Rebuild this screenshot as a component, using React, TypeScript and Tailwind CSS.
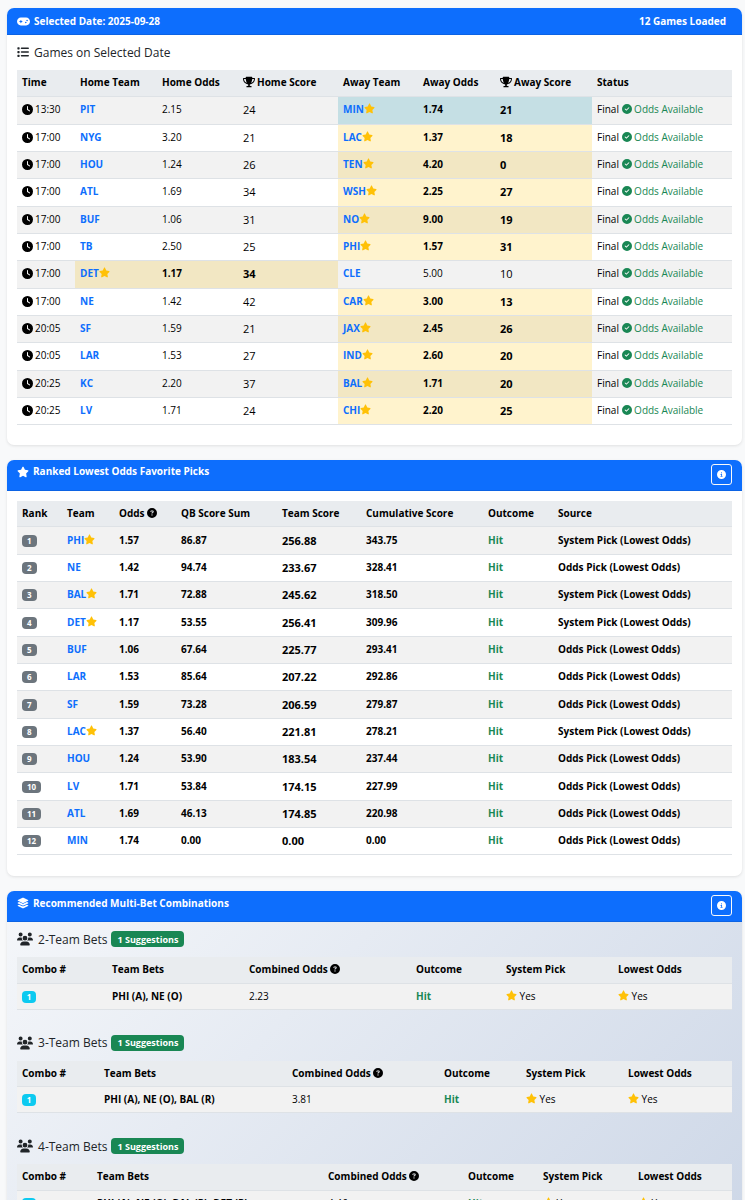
import type { ReactNode } from "react";
import clsx from "clsx";
import {
  FaCircleCheck,
  FaCircleInfo,
  FaCircleQuestion,
  FaClock,
  FaGamepad,
  FaLayerGroup,
  FaList,
  FaStar,
  FaTrophy,
  FaUsers,
} from "react-icons/fa6";

type Side = "home" | "away";

interface IGame {
  time: string;
  home: string;
  homeOdds: string;
  homeScore: number;
  away: string;
  awayOdds: string;
  awayScore: number;
  pick: Side;
  locked?: boolean;
}

interface IPick {
  team: string;
  odds: string;
  qb: string;
  score: string;
  total: string;
  system?: boolean;
}

interface ICombo {
  size: number;
  teams: string;
  odds: string;
  cols: string[];
}

const games: IGame[] = [
  { time: "13:30", home: "PIT", homeOdds: "2.15", homeScore: 24, away: "MIN", awayOdds: "1.74", awayScore: 21, pick: "away", locked: true },
  { time: "17:00", home: "NYG", homeOdds: "3.20", homeScore: 21, away: "LAC", awayOdds: "1.37", awayScore: 18, pick: "away" },
  { time: "17:00", home: "HOU", homeOdds: "1.24", homeScore: 26, away: "TEN", awayOdds: "4.20", awayScore: 0, pick: "away" },
  { time: "17:00", home: "ATL", homeOdds: "1.69", homeScore: 34, away: "WSH", awayOdds: "2.25", awayScore: 27, pick: "away" },
  { time: "17:00", home: "BUF", homeOdds: "1.06", homeScore: 31, away: "NO", awayOdds: "9.00", awayScore: 19, pick: "away" },
  { time: "17:00", home: "TB", homeOdds: "2.50", homeScore: 25, away: "PHI", awayOdds: "1.57", awayScore: 31, pick: "away" },
  { time: "17:00", home: "DET", homeOdds: "1.17", homeScore: 34, away: "CLE", awayOdds: "5.00", awayScore: 10, pick: "home" },
  { time: "17:00", home: "NE", homeOdds: "1.42", homeScore: 42, away: "CAR", awayOdds: "3.00", awayScore: 13, pick: "away" },
  { time: "20:05", home: "SF", homeOdds: "1.59", homeScore: 21, away: "JAX", awayOdds: "2.45", awayScore: 26, pick: "away" },
  { time: "20:05", home: "LAR", homeOdds: "1.53", homeScore: 27, away: "IND", awayOdds: "2.60", awayScore: 20, pick: "away" },
  { time: "20:25", home: "KC", homeOdds: "2.20", homeScore: 37, away: "BAL", awayOdds: "1.71", awayScore: 20, pick: "away" },
  { time: "20:25", home: "LV", homeOdds: "1.71", homeScore: 24, away: "CHI", awayOdds: "2.20", awayScore: 25, pick: "away" },
];

const picks: IPick[] = [
  { team: "PHI", odds: "1.57", qb: "86.87", score: "256.88", total: "343.75", system: true },
  { team: "NE", odds: "1.42", qb: "94.74", score: "233.67", total: "328.41" },
  { team: "BAL", odds: "1.71", qb: "72.88", score: "245.62", total: "318.50", system: true },
  { team: "DET", odds: "1.17", qb: "53.55", score: "256.41", total: "309.96", system: true },
  { team: "BUF", odds: "1.06", qb: "67.64", score: "225.77", total: "293.41" },
  { team: "LAR", odds: "1.53", qb: "85.64", score: "207.22", total: "292.86" },
  { team: "SF", odds: "1.59", qb: "73.28", score: "206.59", total: "279.87" },
  { team: "LAC", odds: "1.37", qb: "56.40", score: "221.81", total: "278.21", system: true },
  { team: "HOU", odds: "1.24", qb: "53.90", score: "183.54", total: "237.44" },
  { team: "LV", odds: "1.71", qb: "53.84", score: "174.15", total: "227.99" },
  { team: "ATL", odds: "1.69", qb: "46.13", score: "174.85", total: "220.98" },
  { team: "MIN", odds: "1.74", qb: "0.00", score: "0.00", total: "0.00" },
];

const gameCols = ["w-[58px]", "w-[82px]", "w-[81px]", "w-[100px]", "w-[80px]", "w-[77px]", "w-[97px]", "w-[140px]"];
const pickCols = ["w-[45px]", "w-[52px]", "w-[62px]", "w-[101px]", "w-[84px]", "w-[122px]", "w-[70px]", "w-[179px]"];

const combos: ICombo[] = [
  {
    size: 2,
    teams: "PHI (A), NE (O)",
    odds: "2.23",
    cols: ["w-[90px]", "w-[137px]", "w-[167px]", "w-[90px]", "w-[112px]", "w-[119px]"],
  },
  {
    size: 3,
    teams: "PHI (A), NE (O), BAL (R)",
    odds: "3.81",
    cols: ["w-[82px]", "w-[188px]", "w-[152px]", "w-[82px]", "w-[102px]", "w-[109px]"],
  },
  {
    size: 4,
    teams: "PHI (A), NE (O), BAL (R), DET (R)",
    odds: "4.46",
    cols: ["w-[75px]", "w-[231px]", "w-[140px]", "w-[75px]", "w-[95px]", "w-[99px]"],
  },
];

const Star = () => <FaStar className="inline size-[11px] align-[-1px] text-[#ffc107]" />;
const Trophy = () => <FaTrophy className="mr-[2px] inline size-[12px] align-[-2px]" />;
const Help = () => <FaCircleQuestion className="inline size-[10px] align-[-1px]" />;

const Team = ({ name, star }: { name: string; star?: boolean }) => (
  <>
    <a href={`#${name}`} className="font-bold text-[#0d6efd]">{name}</a>
    {star && <Star />}
  </>
);

const InfoButton = ({ label }: { label: string }) => (
  <button
    type="button"
    aria-label={label}
    className="mt-[4px] mb-[5px] flex size-[21px] cursor-pointer items-center justify-center rounded-[3px] border border-[#f8f9fa]"
  >
    <FaCircleInfo className="size-[9px]" />
  </button>
);

const Card = ({ header, className, children }: { header: ReactNode; className?: string; children: ReactNode }) => (
  <section className={clsx("overflow-hidden rounded-[7px] shadow-[0_1px_3px_rgba(0,0,0,0.1)]", className ?? "bg-white")}>
    <header className="flex items-start justify-between border-b border-[#0c63e4] bg-[#0d6efd] px-[10px] font-bold text-white">
      {header}
    </header>
    {children}
  </section>
);

const Table = ({ cols, heads, children }: { cols: string[]; heads: ReactNode[]; children: ReactNode }) => (
  <table className="w-full table-fixed border-collapse text-left whitespace-nowrap">
    <colgroup>
      {cols.map((c, i) => <col key={i} className={c} />)}
    </colgroup>
    <thead>
      <tr className="h-[26px] border-b border-[#dee2e6] bg-[#e9ecef]">
        {heads.map((h, i) => <th key={i} scope="col" className="px-[5px] font-bold">{h}</th>)}
      </tr>
    </thead>
    <tbody>{children}</tbody>
  </table>
);

const rowClass = "h-[27px] border-b border-[#dee2e6] odd:bg-[#f2f2f2] nth-[3n+1]:h-[28px] [&>td]:pb-px";

const GameRow = ({ game, striped }: { game: IGame; striped: boolean }) => {
  const cell = (side: Side) => {
    if (game.pick !== side) return "px-[5px]";
    const color = game.locked ? "bg-[#c5dfe4]" : striped ? "bg-[#f2e7c3]" : "bg-[#fff3cd]";
    return clsx("px-[5px] font-bold", color);
  };
  return (
    <tr className={rowClass}>
      <td className="px-[5px]"><FaClock className="mr-[2px] inline size-[11px] align-[-2px]" />{game.time}</td>
      <td className={cell("home")}><Team name={game.home} star={game.pick === "home"} /></td>
      <td className={cell("home")}>{game.homeOdds}</td>
      <td className={clsx("text-[11px]", cell("home"))}>{game.homeScore}</td>
      <td className={cell("away")}><Team name={game.away} star={game.pick === "away"} /></td>
      <td className={cell("away")}>{game.awayOdds}</td>
      <td className={clsx("text-[11px]", cell("away"))}>{game.awayScore}</td>
      <td className="px-[5px]">
        Final <span className="text-[#198754]"><FaCircleCheck className="inline size-[10px] align-[-1px]" /> Odds Available</span>
      </td>
    </tr>
  );
};

const ComboTable = ({ combo }: { combo: ICombo }) => (
  <div className="mb-[25px]">
    <h2 className="mb-[10px] flex h-[16px] items-center text-[12px] font-medium text-[#212529]">
      <FaUsers className="mr-[5px] size-[16px]" />
      {combo.size}-Team Bets
      <span className="ml-[4px] flex h-[16px] items-center rounded-[4px] bg-[#198754] px-[6px] text-[9px] font-bold text-white">1 Suggestions</span>
    </h2>
    <Table
      cols={combo.cols}
      heads={["Combo #", "Team Bets", <>Combined Odds <Help /></>, "Outcome", "System Pick", "Lowest Odds"]}
    >
      <tr className="h-[26px] border-b border-[#dee2e6] bg-[#f2f2f2]">
        <td className="px-[5px]">
          <span className="inline-block h-[12px] w-[14px] rounded-[4px] bg-[#0dcaf0] text-center align-middle text-[8px] leading-[12px] font-bold text-white">1</span>
        </td>
        <td className="px-[5px] font-bold">{combo.teams}</td>
        <td className="px-[5px]">{combo.odds}</td>
        <td className="px-[5px] font-bold text-[#198754]">Hit</td>
        <td className="px-[5px]"><Star /> Yes</td>
        <td className="px-[5px]"><Star /> Yes</td>
      </tr>
    </Table>
  </div>
);

export default function App() {
  return (
    <main className="flex min-h-screen flex-col gap-[15px] bg-[#f8f9fa] pt-[8px] pr-[3px] pl-[7px] font-['Open_Sans','Noto_Sans',sans-serif] text-[10px] leading-[15px] text-black">
      <Card
        header={
          <>
            <h1 className="flex h-[26px] items-center gap-[4px]"><FaGamepad className="size-[13px]" /> Selected Date: 2025-09-28</h1>
            <p className="flex h-[26px] items-center px-[6px]">12 Games Loaded</p>
          </>
        }
      >
        <div className="px-[10px] pt-[8px] pb-[20px]">
          <h2 className="mb-[9px] flex h-[18px] items-center gap-[5px] text-[12px] font-medium text-[#212529]">
            <FaList className="size-[12px]" /> Games on Selected Date
          </h2>
          <Table
            cols={gameCols}
            heads={["Time", "Home Team", "Home Odds", <><Trophy />Home Score</>, "Away Team", "Away Odds", <><Trophy />Away Score</>, "Status"]}
          >
            {games.map((g, i) => <GameRow key={i} game={g} striped={i % 2 === 0} />)}
          </Table>
        </div>
      </Card>

      <Card
        header={
          <>
            <h2 className="flex h-[24px] items-center gap-[4px]"><FaStar className="size-[12px]" /> Ranked Lowest Odds Favorite Picks</h2>
            <InfoButton label="About ranked picks" />
          </>
        }
      >
        <div className="px-[10px] pt-[10px] pb-[21px]">
          <Table
            cols={pickCols}
            heads={["Rank", "Team", <>Odds <Help /></>, "QB Score Sum", "Team Score", "Cumulative Score", "Outcome", "Source"]}
          >
            {picks.map((p, i) => (
              <tr key={p.team} className={clsx(rowClass, "font-bold")}>
                <td className="px-[5px]">
                  <span className="inline-block h-[12px] min-w-[14px] rounded-[4px] bg-[#6c757d] px-[5px] text-center align-middle text-[8px] leading-[12px] text-white">{i + 1}</span>
                </td>
                <td className="px-[5px]"><Team name={p.team} star={p.system} /></td>
                <td className="px-[5px]">{p.odds}</td>
                <td className="px-[5px]">{p.qb}</td>
                <td className="px-[5px] text-[11px]">{p.score}</td>
                <td className="px-[5px]">{p.total}</td>
                <td className="px-[5px] text-[#198754]">Hit</td>
                <td className="px-[5px]">{p.system ? "System" : "Odds"} Pick (Lowest Odds)</td>
              </tr>
            ))}
          </Table>
        </div>
      </Card>

      <Card
        className="bg-linear-135 from-[#f5f7fa] to-[#cdd7e7]"
        header={
          <>
            <h2 className="flex h-[24px] items-center gap-[4px]"><FaLayerGroup className="size-[12px]" /> Recommended Multi-Bet Combinations</h2>
            <InfoButton label="About combinations" />
          </>
        }
      >
        <div className="px-[10px] pt-[9px]">
          {combos.map((c) => <ComboTable key={c.size} combo={c} />)}
        </div>
      </Card>
    </main>
  );
}
